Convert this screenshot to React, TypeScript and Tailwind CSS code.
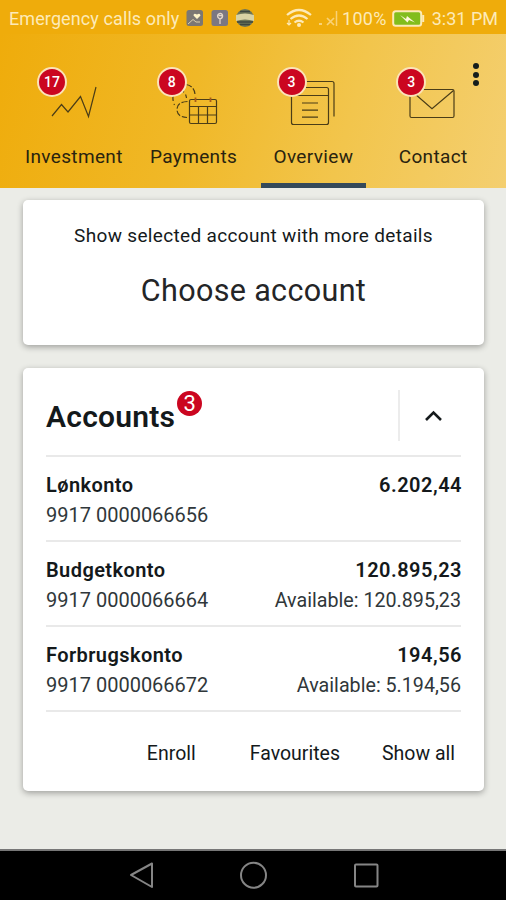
import React from "react";

type Tab = { label: string; badge: string; active?: boolean; icon: React.ReactNode };

const tabs: Tab[] = [
  {
    label: "Investment",
    badge: "17",
    icon: <path d="M38 54 47.5 42.5 54 50 66.5 34.500 74.500 54.500 82 25" />,
  },
  {
    label: "Payments",
    badge: "8",
    icon: (
      <>
        <rect x="55.500" y="37.500" width="27" height="24" rx="1.500" />
        <path d="M55.500 44.500H82.500M55.500 53H82.500M64.500 44.500V61M73.500 44.500V61" />
        <path d="M61.500 35.500V40M76.500 35.500V40" stroke="#a55a1c" strokeWidth="1.800" />
        <path d="M52 22.500Q60.500 24 61 32.500" strokeDasharray="6 2" />
        <path d="M45.500 28Q51.500 29 52.500 36M39 34Q38.500 39 40.500 43" strokeDasharray="5 3" />
        <path d="M53.500 39.500Q43 40 43 47.500T53 55.500" strokeDasharray="6 2" />
      </>
    ),
  },
  {
    label: "Overview",
    badge: "3",
    active: true,
    icon: (
      <>
        <rect x="38.500" y="25.500" width="37" height="37" rx="2" />
        <path d="M38.500 33.500H75.500M49 41H65M49 48.200H65M49 55.200H65" />
        <path d="M51.500 19.500H79Q81 19.500 81 21.500V54.500" />
      </>
    ),
  },
  {
    label: "Contact",
    badge: "3",
    icon: (
      <>
        <rect x="37" y="27.500" width="44" height="28" rx="1.500" />
        <path d="M38 28.500 59 46.700 80.500 28.500" />
      </>
    ),
  },
];

const accounts = [
  { name: "Lønkonto", number: "9917 0000066656", amount: "6.202,44", available: "" },
  { name: "Budgetkonto", number: "9917 0000066664", amount: "120.895,23", available: "Available: 120.895,23" },
  { name: "Forbrugskonto", number: "9917 0000066672", amount: "194,56", available: "Available: 5.194,56" },
];

function StatusBar() {
  return (
    <div className="flex h-[34px] items-center bg-[#efac0b] pl-[9px] pr-[8px] pt-[2px] text-[18px] text-[#fdeab8]">
      <span className="w-[177px] whitespace-nowrap tracking-[0.1px]">Emergency calls only</span>
      <svg width="70" height="18" viewBox="0 0 70 18" className="shrink-0">
        <rect x="0.500" y="1" width="16.500" height="16" rx="2.500" fill="#7b7773" />
        <path d="M11 10 7.500 6.500Q7.500 3.500 11 5.500 14 3.500 14.500 6.500Z" fill="#fff4c8" />
        <path d="M2 15 7 10.500 10 13H14" stroke="#ddd1ac" fill="none" />
        <rect x="25.500" y="1" width="16.500" height="16" rx="2.500" fill="#7b7782" />
        <path d="M34 15V9M34 10Q30.500 8 32 5.500 35 3 36.500 6 37 9 34 10M32.500 6.500H36" stroke="#e3d5c8" strokeWidth="1.300" fill="none" />
        <circle cx="59" cy="9" r="9" fill="#6d7557" />
        <path d="M50 6Q59 3 68 6V12Q59 9 50 12Z" fill="#d9d3a4" />
        <path d="M51 13H67M54 2.500H64M54 15.500H64" stroke="#3e4740" strokeWidth="1.500" />
      </svg>
      <svg width="28" height="20" viewBox="0 0 28 20" className="ml-[30px] shrink-0" fill="none" stroke="#fdeab8" strokeWidth="2.200">
        <path d="M1 7Q13 -3 25 7M4.500 11Q13 4 21.500 11M8.500 14.500Q13 11 17.500 14.500" />
        <circle cx="13" cy="17" r="2" fill="#fdeab8" stroke="none" />
        <path d="M3 12V17M1 15 3 17 5 15" strokeWidth="1.200" />
      </svg>
      <svg width="22" height="18" viewBox="0 0 22 18" className="ml-[3px] shrink-0" fill="none" stroke="#f9d277">
        <path d="M2 15H5" strokeWidth="2" />
        <path d="M10 9 17 16M17 9 10 16" strokeWidth="1.700" />
        <path d="M19.500 2V17" strokeWidth="1.500" />
      </svg>
      <span className="ml-[3px] w-[50px] whitespace-nowrap tracking-[0.3px]">100%</span>
      <svg width="33" height="19" viewBox="0 0 33 19" className="shrink-0">
        <rect x="1.200" y="2.200" width="28" height="14.600" rx="2.500" fill="#82bd1c" stroke="#fdeab8" strokeWidth="2" />
        <path d="M31.200 6V13" stroke="#fdeab8" strokeWidth="2" />
        <path d="M8 6 14 10 15 7 23 13.500 17 11 15.500 13.500Z" fill="#fff8dc" />
      </svg>
      <span className="ml-auto whitespace-nowrap">3:31 PM</span>
    </div>
  );
}

function Header() {
  return (
    <header className="relative grid h-[154px] grid-cols-4 bg-[linear-gradient(105deg,#efac0b_0%,#f0b827_38%,#f2c54c_68%,#f4cf70_100%)] pl-[14px] pr-[13px]">
      {tabs.map((t) => (
        <div key={t.label} className="relative flex flex-col items-center pt-[28px]">
          <svg width="120" height="68" viewBox="0 0 120 68" fill="none" stroke="#4b3d17" strokeWidth="1.200">
            {t.icon}
          </svg>
          <span className="absolute left-[23px] top-[33px] flex size-[30px] items-center justify-center rounded-full border-2 border-[#fbe3b8] bg-[#cb0620] text-[14px] font-medium leading-none text-white">
            {t.badge}
          </span>
          <span className="mt-[15px] text-[19px] leading-[24px] tracking-[0.35px] text-[#29230f]">{t.label}</span>
          {t.active && <span className="absolute bottom-0 h-[5px] w-[105px] bg-[#34495a]" />}
        </div>
      ))}
      <div className="absolute right-[27px] top-[29px] flex flex-col gap-[2.500px]">
        <i className="size-[6px] rounded-full bg-[#151d1c]" />
        <i className="size-[6px] rounded-full bg-[#151d1c]" />
        <i className="size-[6px] rounded-full bg-[#151d1c]" />
      </div>
    </header>
  );
}

export default function App() {
  return (
    <div className="flex h-[900px] w-[506px] flex-col overflow-hidden bg-[#ebece7] font-['Roboto',sans-serif] text-[#14191b]">
      <StatusBar />
      <Header />
      <main className="flex flex-1 flex-col pl-[23px] pr-[22px] pt-[12px]">
        <section className="flex h-[145px] flex-col items-center rounded-[5px] bg-white pt-[24px] shadow-[0_2px_6px_rgba(0,0,0,0.33)]">
          <p className="whitespace-nowrap text-[19px] leading-[24px] tracking-[0.33px]">Show selected account with more details</p>
          <h1 className="mt-[25px] whitespace-nowrap text-[30.500px] leading-[36px] tracking-[0.350px] text-[#242527]">Choose account</h1>
        </section>
        <section className="mt-[23px] flex h-[423px] flex-col rounded-[5px] bg-white px-[23px] shadow-[0_2px_6px_rgba(0,0,0,0.33)]">
          <div className="flex h-[89px] items-center border-b-2 border-[#e9e9e9] pt-[8px]">
            <h2 className="pt-[3px] text-[30px] font-semibold leading-[36px] tracking-[0.25px]">Accounts</h2>
            <span className="mb-[24px] ml-[2px] flex size-[25px] items-center justify-center rounded-full bg-[#cb0620] text-[22px] leading-none text-white">3</span>
            <div className="ml-auto flex h-[51px] w-[63px] items-center border-l-2 border-[#ececec]">
              <svg width="20" height="14" viewBox="0 0 20 14" className="ml-[24px]" fill="none" stroke="#161b1d" strokeWidth="2.600">
                <path d="M2 11 9.500 3.500 17 11" />
              </svg>
            </div>
          </div>
          {accounts.map((a) => (
            <div key={a.name} className="flex h-[85px] flex-col border-b-2 border-[#e9e9e9] pt-[15px] text-[20px]">
              <div className="flex justify-between font-semibold leading-[26px]">
                <span className="tracking-[0.42px]">{a.name}</span>
                <span className="-mr-[1px] tracking-[0.5px]">{a.amount}</span>
              </div>
              <div className="mt-[5px] flex justify-between leading-[25px] text-[#30373a]">
                <span>{a.number}</span>
                <span className="text-[19.700px]">{a.available}</span>
              </div>
            </div>
          ))}
          <div className="flex justify-end pr-[6px] pt-[30px] text-[19.500px] leading-[24px]">
            <span className="mr-[54px]">Enroll</span>
            <span className="mr-[42px]">Favourites</span>
            <span>Show all</span>
          </div>
        </section>
      </main>
      <nav className="flex h-[51px] shrink-0 justify-center border-t-2 border-[#777] bg-black">
        <svg width="252" height="49" viewBox="127 851 252 49" fill="none" stroke="#858585" strokeWidth="2">
          <path d="M131 875 152 863.500V887Z" strokeLinejoin="round" />
          <circle cx="253.500" cy="875.200" r="12.500" />
          <rect x="355" y="864.500" width="22.500" height="22" rx="1" />
        </svg>
      </nav>
    </div>
  );
}
